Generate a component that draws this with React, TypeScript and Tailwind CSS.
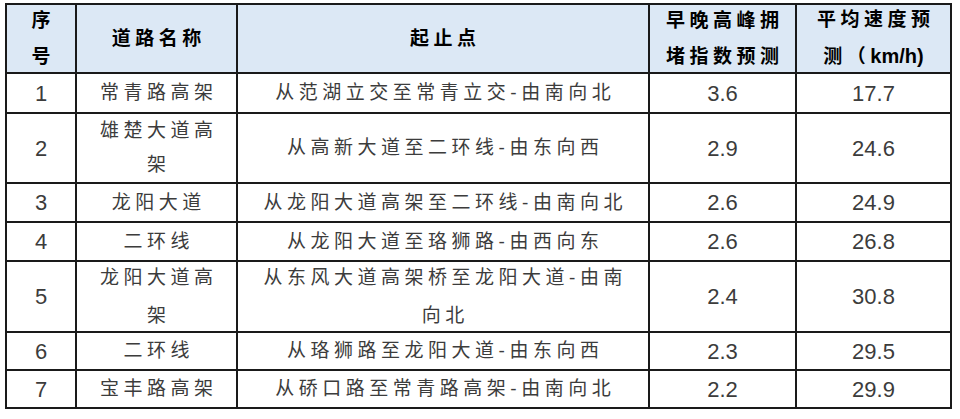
import React from "react";

const rows: { n: string; name: string[]; route: string[]; idx: string; speed: string; lh: string }[] = [
  { n: "1", name: ["常青路高架"], route: ["从范湖立交至常青立交-由南向北"], idx: "3.6", speed: "17.7", lh: "leading-[34px]" },
  { n: "2", name: ["雄楚大道高", "架"], route: ["从高新大道至二环线-由东向西"], idx: "2.9", speed: "24.6", lh: "leading-[34px]" },
  { n: "3", name: ["龙阳大道"], route: ["从龙阳大道高架至二环线-由南向北"], idx: "2.6", speed: "24.9", lh: "leading-[34px]" },
  { n: "4", name: ["二环线"], route: ["从龙阳大道至珞狮路-由西向东"], idx: "2.6", speed: "26.8", lh: "leading-[34px]" },
  { n: "5", name: ["龙阳大道高", "架"], route: ["从东风大道高架桥至龙阳大道-由南", "向北"], idx: "2.4", speed: "30.8", lh: "leading-[38px]" },
  { n: "6", name: ["二环线"], route: ["从珞狮路至龙阳大道-由东向西"], idx: "2.3", speed: "29.5", lh: "leading-[34px]" },
  { n: "7", name: ["宝丰路高架"], route: ["从硚口路至常青路高架-由南向北"], idx: "2.2", speed: "29.9", lh: "leading-[34px]" },
];

const font = { fontFamily: '"Liberation Sans", "Noto Sans CJK SC", sans-serif' };

function Lines({ lines, lh }: { lines: string[]; lh: string }) {
  return (
    <div className={`flex flex-col items-center ${lh}`}>
      {lines.map((l, i) => (
        <span key={i} className="tracking-[4.5px] pl-[4.5px] whitespace-nowrap">
          {l}
        </span>
      ))}
    </div>
  );
}

export default function App() {
  const hc = "bg-[#dce8f5] flex items-center justify-center text-black font-bold text-[19px]";
  const bc = "bg-white flex items-center justify-center text-[#3c3c3c]";
  return (
    <div className="w-[960px] h-[419px] bg-white pt-[3px] pl-[5px]" style={font}>
      <div className="grid w-[947px] bg-[#1a1a1a] p-[2px] gap-[2px] grid-cols-[68px_159px_410px_145px_153px] grid-rows-[67px_38px_68px_37px_37px_69px_36px_36px]">
        <div className={hc}>
          <Lines lines={["序", "号"]} lh="leading-[36px]" />
        </div>
        <div className={hc}>
          <Lines lines={["道路名称"]} lh="leading-[36px]" />
        </div>
        <div className={hc}>
          <Lines lines={["起止点"]} lh="leading-[36px]" />
        </div>
        <div className={hc}>
          <Lines lines={["早晚高峰拥", "堵指数预测"]} lh="leading-[36px]" />
        </div>
        <div className={hc}>
          <div className="flex flex-col items-center leading-[36px]">
            <span className="tracking-[4.5px] pl-[4.5px] whitespace-nowrap">平均速度预</span>
            <span className="whitespace-nowrap">
              <span className="tracking-[4.5px]">测（</span>
              <span className="text-[20px]">km/h)</span>
            </span>
          </div>
        </div>
        {rows.map((r) => (
          <React.Fragment key={r.n}>
            <div className={`${bc} text-[22px]`}>{r.n}</div>
            <div className={`${bc} text-[19px]`}>
              <Lines lines={r.name} lh={r.lh} />
            </div>
            <div className={`${bc} text-[19px]`}>
              <Lines lines={r.route} lh={r.lh} />
            </div>
            <div className={`${bc} text-[22px]`}>{r.idx}</div>
            <div className={`${bc} text-[22px]`}>{r.speed}</div>
          </React.Fragment>
        ))}
      </div>
    </div>
  );
}
